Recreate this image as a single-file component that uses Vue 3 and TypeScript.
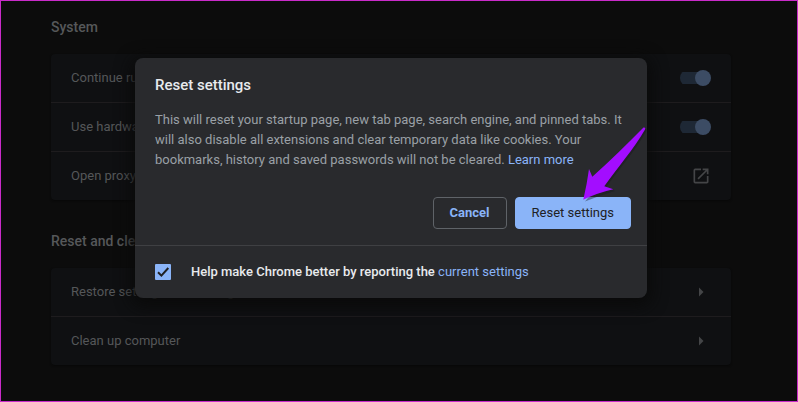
<script setup lang="ts">
import { ref } from 'vue'

interface SystemToggle {
  id: string
  label: string
  on: boolean
}

const toggles = ref<SystemToggle[]>([
  { id: 'background', label: 'Continue running background apps', on: true },
  { id: 'hardware', label: 'Use hardware acceleration when available', on: true },
])

const resetLinks: string[] = ['Restore settings to their original defaults', 'Clean up computer']

const reportSettings = ref(true)
</script>

<template>
  <div class="page">
    <main class="content">
      <section>
        <h2 class="section-title">System</h2>
        <div class="card">
          <label v-for="item in toggles" :key="item.id" class="row" :for="item.id">
            <span>{{ item.label }}</span>
            <input :id="item.id" v-model="item.on" class="switch" type="checkbox" role="switch" />
          </label>
          <a class="row" href="#proxy">
            <span>Open proxy settings</span>
            <svg class="icon" viewBox="0 0 24 24" aria-hidden="true">
              <path d="M19 19H5V5h7V3H5a2 2 0 0 0-2 2v14a2 2 0 0 0 2 2h14c1.1 0 2-.9 2-2v-7h-2v7zM14 3v2h3.59l-9.83 9.83 1.41 1.41L19 6.41V10h2V3h-7z" />
            </svg>
          </a>
        </div>
      </section>
      <section>
        <h2 class="section-title">Reset and clean up</h2>
        <div class="card">
          <a v-for="label in resetLinks" :key="label" class="row" href="#reset">
            <span>{{ label }}</span>
            <svg class="icon" viewBox="0 0 20 20" aria-hidden="true">
              <path d="M8 5.5 12.5 10 8 14.5z" />
            </svg>
          </a>
        </div>
      </section>
    </main>

    <div class="overlay">
      <div class="dialog" role="dialog" aria-modal="true" aria-labelledby="dialog-title">
        <div class="dialog-body">
          <h1 id="dialog-title" class="dialog-title">Reset settings</h1>
          <p class="dialog-text">
            This will reset your startup page, new tab page, search engine, and pinned tabs. It will
            also disable all extensions and clear temporary data like cookies. Your bookmarks,
            history and saved passwords will not be cleared. <a class="link" href="#learn">Learn more</a>
          </p>
          <div class="actions">
            <button class="button cancel" type="button">Cancel</button>
            <button class="button confirm" type="button">Reset settings</button>
          </div>
        </div>
        <div class="dialog-footer">
          <span class="check">
            <input id="report" v-model="reportSettings" class="check-input" type="checkbox" />
            <svg v-if="reportSettings" class="check-mark" viewBox="0 0 16 16" aria-hidden="true">
              <path d="M3 8.2 6.4 11.6 13.3 4" />
            </svg>
          </span>
          <label class="report" for="report">
            Help make Chrome better by reporting the
            <a class="link" href="#current">current settings</a>
          </label>
        </div>
        <svg class="pointer" viewBox="0 0 66 76" aria-hidden="true">
          <path d="M64.5 3Q66 3 65 5.5C55 24 38 43 25 61.5L34 65Q20 69 4 75.5z" class="pointer-shade" />
          <path d="M62.5 1.5Q65 1 64 3.5C53 23 36 42 23.3 60.3L32.3 63.3Q16 67 2.3 73.8Q6 58 8 43L11.3 50.7C29 35 46 18 62.5 1.5z" class="pointer-fill" />
        </svg>
      </div>
    </div>
  </div>
</template>

<style>
body {
  background: #0c0c0c;
}
</style>

<style scoped>
* {
  box-sizing: border-box;
}

.page {
  position: relative;
  min-height: 100vh;
  padding: 0 16px 0 0;
  border: 1px solid #c92bc9;
  background: #0c0c0c;
  color: #555759;
  font-family: Roboto, "Liberation Sans", sans-serif;
  font-size: 13px;
  line-height: 20px;
}

.content {
  max-width: 680px;
  margin: 0 auto;
  padding-top: 15px;
  display: flex;
  flex-direction: column;
  gap: 30px;
}

.section-title {
  margin: 0 0 16px;
  color: #56585a;
  font-size: 14px;
  font-weight: 500;
  line-height: 22px;
}

.card {
  border-radius: 4px;
  background: #0f1012;
  box-shadow: 0 1px 2px #080808;
}

.row {
  display: flex;
  align-items: center;
  justify-content: space-between;
  height: 48px;
  padding: 0 20px;
  color: inherit;
  text-decoration: none;
}

.row + .row {
  height: 49px;
  border-top: 1px solid #1e1c1e;
}

.switch {
  appearance: none;
  display: flex;
  align-items: center;
  justify-content: flex-end;
  width: 31px;
  height: 16px;
  margin: 0;
  background: linear-gradient(#1e2835, #1e2835) left center / 28px 12px no-repeat;
  border-radius: 8px;
}

.switch::before {
  content: "";
  width: 16px;
  height: 16px;
  border-radius: 50%;
  background: #3c4c64;
}

.switch:not(:checked) {
  justify-content: flex-start;
}

.icon {
  width: 20px;
  height: 20px;
  fill: #444547;
}

.overlay {
  position: absolute;
  inset: 0 16px 0 0;
  display: flex;
  align-items: flex-start;
  justify-content: center;
  padding-top: 57px;
}

.dialog {
  position: relative;
  width: 512px;
  max-width: 100%;
  border-radius: 8px;
  background: #292a2d;
  box-shadow: 0 4px 16px 4px #0a0a0a;
}

.dialog-body {
  padding: 16px 16px 16px 20px;
}

.dialog-title {
  margin: 0 0 14px;
  color: #e8eaed;
  font-size: 15px;
  font-weight: 500;
  line-height: 22px;
}

.dialog-text {
  margin: 0;
  color: #9aa0a6;
}

.link {
  color: #8ab4f8;
  font-weight: 400;
  text-decoration: none;
}

.actions {
  display: flex;
  justify-content: flex-end;
  gap: 8px;
  margin-top: 27px;
}

.button {
  height: 32px;
  padding: 0 16px;
  border: 1px solid #5f6368;
  border-radius: 4px;
  background: transparent;
  font: inherit;
}

.cancel {
  color: #8ab4f8;
  font-weight: 700;
}

.confirm {
  border-color: #8ab4f8;
  background: #8ab4f8;
  color: #202124;
}

.dialog-footer {
  display: flex;
  align-items: center;
  gap: 20px;
  height: 53px;
  padding: 0 20px;
  border-top: 1px solid #3f4043;
}

.check {
  position: relative;
  display: flex;
}

.check-input {
  appearance: none;
  width: 16px;
  height: 16px;
  margin: 0;
  border: 2px solid #9aa0a6;
  border-radius: 1px;
}

.check-input:checked {
  border-color: #8ab4f8;
  background: #8ab4f8;
}

.check-mark {
  position: absolute;
  inset: 0;
  fill: none;
  stroke: #202124;
  stroke-width: 2;
  pointer-events: none;
}

.report {
  color: #e8eaed;
  font-weight: 500;
}

.pointer {
  position: absolute;
  top: 68px;
  right: 0;
  width: 66px;
  height: 76px;
  pointer-events: none;
}

.pointer-fill {
  fill: #a30dff;
}

.pointer-shade {
  fill: #17171c;
  opacity: 0.4;
}
</style>
